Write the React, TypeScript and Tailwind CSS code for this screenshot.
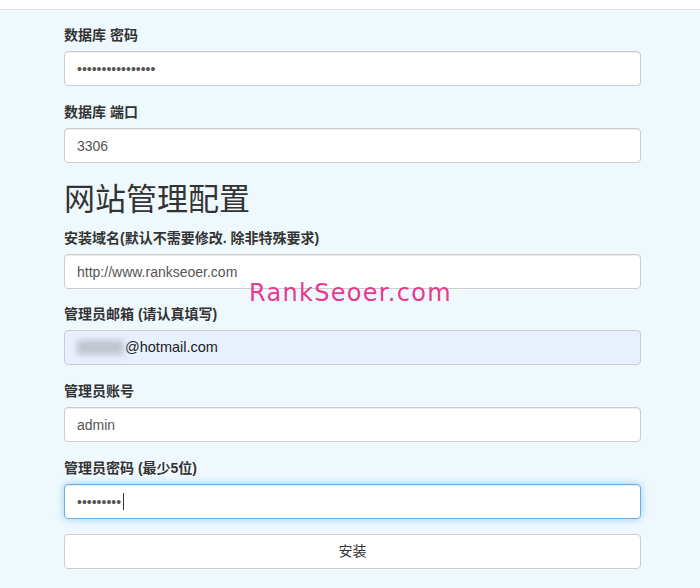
const sans = "font-['Liberation_Sans','Noto_Sans_CJK_SC',sans-serif]";

const inputBase =
  'block h-[35px] w-full rounded-[4px] border border-[#ccc] bg-white px-3 text-[14px] text-[#555] shadow-[inset_0_1px_1px_rgba(0,0,0,0.075)] outline-none';

const Label = ({ children }: { children: React.ReactNode }) => (
  <label className="mb-[6px] block h-[20px] text-[14px] leading-[20px] font-bold text-[#333]">{children}</label>
);

const Group = ({ label, children }: { label: string; children: React.ReactNode }) => (
  <div className="mb-[16px]">
    <Label>{label}</Label>
    {children}
  </div>
);

export default function App() {
  return (
    <div className={`relative min-h-[588px] bg-[#eff9fd] ${sans}`}>
      <div className="h-[10px] border-b border-[#dfe3e6] bg-white" />

      <form className="flex w-[641px] flex-col pt-[15px] pl-[64px]" onSubmit={(e) => e.preventDefault()}>
        <Group label="数据库 密码">
          <input type="password" readOnly defaultValue="rankseoer1234567" className={inputBase} />
        </Group>

        <Group label="数据库 端口">
          <input type="text" readOnly defaultValue="3306" className={inputBase} />
        </Group>

        <h3 className="mt-[3px] mb-[10px] text-[31px] leading-[36px] font-normal text-[#333]">网站管理配置</h3>

        <div className="mb-[15px]">
          <Label>安装域名(默认不需要修改. 除非特殊要求)</Label>
          <input type="text" readOnly defaultValue="http://www.rankseoer.com" className={inputBase} />
        </div>

        <Group label="管理员邮箱 (请认真填写)">
          <div className="flex h-[35px] w-full items-center rounded-[4px] border border-[#ccc] bg-[#e8f0fe] px-3 text-[14.5px] text-[#222]">
            <span className="mr-[1px] inline-block h-[15px] w-[47px] bg-[#c0c5cf] blur-[3px]" />
            <span>@hotmail.com</span>
          </div>
        </Group>

        <Group label="管理员账号">
          <input type="text" readOnly defaultValue="admin" className={inputBase} />
        </Group>

        <div className="mb-[15px]">
          <Label>管理员密码 (最少5位)</Label>
          <div className="relative">
            <input
              type="password"
              readOnly
              defaultValue="admin1234"
              className="block h-[35px] w-full rounded-[4px] border border-[#66afe9] bg-white px-3 text-[14px] text-[#555] shadow-[inset_0_1px_1px_rgba(0,0,0,0.075),0_0_8px_rgba(102,175,233,0.6)] outline-none"
            />
            <span className="absolute top-[9px] left-[59px] h-[17px] w-px bg-[#333]" />
          </div>
        </div>

        <button
          type="submit"
          className="block h-[35px] w-full rounded-[4px] border border-[#ccc] bg-white text-[14px] text-[#333]"
        >
          安装
        </button>
      </form>

      <div className="pointer-events-none absolute top-[279px] left-[249px] font-['DejaVu_Sans',sans-serif] text-[24px] leading-[28px] tracking-[1.3px] text-[#e8398f]">
        RankSeoer.com
      </div>
    </div>
  );
}
